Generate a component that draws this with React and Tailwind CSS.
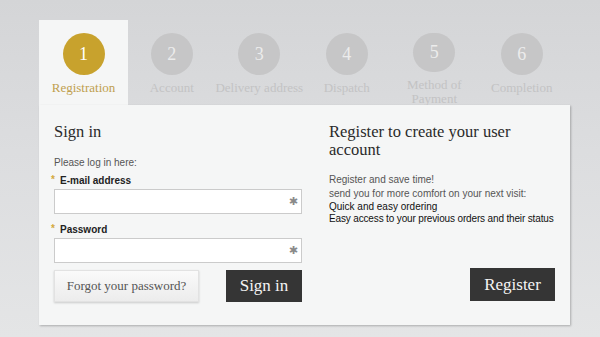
import React from "react";

const steps = [
  { n: "1", label: "Registration", active: true },
  { n: "2", label: "Account" },
  { n: "3", label: "Delivery address" },
  { n: "4", label: "Dispatch" },
  { n: "5", label: "Method of Payment" },
  { n: "6", label: "Completion" },
];

function Field({ label }) {
  return (
    <>
      <div className="flex items-center h-[14px] text-[10px] font-bold text-[#222] -ml-[3px] font-['Liberation_Sans',Arial,sans-serif]">
        <span className="text-[#d3a93c] w-[9px] text-[10px] leading-none">*</span>
        {label}
      </div>
      <div className="mt-[2px] h-[25px] border border-[#cbcbcb] bg-white flex items-center justify-end pr-[3px]">
        <span className="text-[#8a8a8a] text-[11px] leading-none font-['DejaVu_Sans',sans-serif]">✱</span>
      </div>
    </>
  );
}

export default function App() {
  return (
    <div className="w-[600px] h-[337px] overflow-hidden bg-[linear-gradient(180deg,#d4d5d7_0%,#dcdddf_45%,#e4e5e6_100%)] pl-[39px] pt-[20px] font-['Liberation_Serif','DejaVu_Serif',serif]">
      <div className="flex h-[85px]">
        {steps.map((s, i) => (
          <div
            key={s.n}
            className={
              "flex flex-col items-center pt-[13px] " +
              (i === 0 ? "w-[89px] bg-[#f5f6f6]" : "w-[87.5px]")
            }
          >
            <div
              className={
                "w-[42px] h-[42px] rounded-full flex items-center justify-center text-[18px] " +
                (s.active ? "bg-[#c8a22d] text-white" : "bg-[#c6c6c7] text-[#ececec]")
              }
            >
              {s.n}
            </div>
            <div
              className={
                "mt-[6px] text-[13px] leading-[13.5px] text-center whitespace-nowrap " +
                (s.active ? "text-[#bf9f4f]" : "text-[#c3c3c4]")
              }
            >
              {s.n === "5" ? (
                <>
                  Method of
                  <br />
                  Payment
                </>
              ) : (
                s.label
              )}
            </div>
          </div>
        ))}
      </div>
      <div className="relative z-10 w-[531px] h-[220px] bg-[#f5f6f6] shadow-[1px_1px_2px_rgba(0,0,0,0.25)] flex px-[15px] pt-[18px] gap-[27px]">
        <div className="w-[248px] shrink-0 flex flex-col">
          <div className="text-[16.5px] leading-[18px] text-[#2a2a2a]">Sign in</div>
          <div className="mt-[15px] h-[14px] text-[10px] leading-[14px] text-[#555] font-['Liberation_Sans',Arial,sans-serif]">
            Please log in here:
          </div>
          <div className="mt-[3px]" />
          <Field label="E-mail address" />
          <div className="mt-[8px]" />
          <Field label="Password" />
          <div className="mt-[7px] flex justify-between">
            <div className="w-[145px] h-[32px] flex items-center justify-center bg-[linear-gradient(180deg,#fafafa,#ececec)] border border-[#e2e2e2] shadow-[0_1px_2px_rgba(0,0,0,0.18)] text-[13px] text-[#555]">
              Forgot your password?
            </div>
            <div className="w-[76px] h-[32px] flex items-center justify-center bg-[#353535] text-[#f4f4f4] text-[17px]">
              Sign in
            </div>
          </div>
        </div>
        <div className="flex-1 min-w-0 flex flex-col">
          <div className="text-[16.5px] leading-[18px] text-[#2a2a2a]">
            Register to create your user
            <br />
            account
          </div>
          <div className="mt-[14px] text-[10px] leading-[14px] whitespace-nowrap font-['Liberation_Sans',Arial,sans-serif]">
            <div className="text-[#555]">Register and save time!</div>
            <div className="text-[#555]">send you for more comfort on your next visit:</div>
            <div className="text-[#111] leading-[12px]">Quick and easy ordering</div>
            <div className="text-[#111] leading-[12px] tracking-[-0.15px]">
              Easy access to your previous orders and their status
            </div>
          </div>
          <div className="mt-[43px] flex justify-end">
            <div className="w-[85px] h-[33px] flex items-center justify-center bg-[#353535] text-[#f4f4f4] text-[17px]">
              Register
            </div>
          </div>
        </div>
      </div>
    </div>
  );
}
